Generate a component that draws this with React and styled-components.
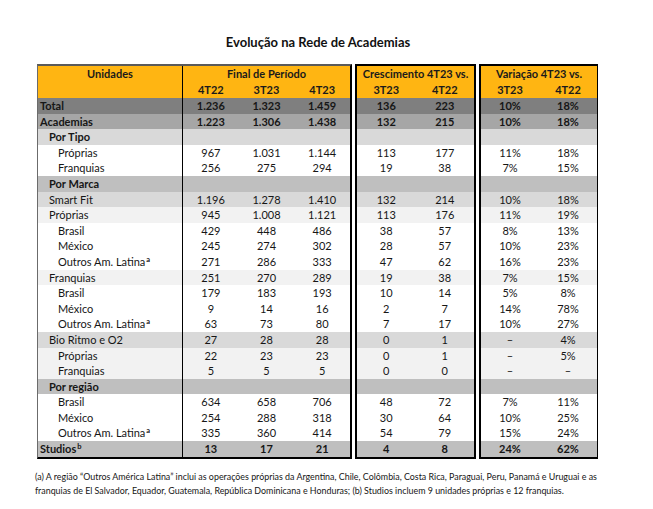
import React from "react";
import styled, { createGlobalStyle } from "styled-components";

const GlobalStyle = createGlobalStyle`
  body {
    margin: 0;
    background: #fff;
    font-family: Lato, "Open Sans", sans-serif;
    color: #161616;
  }
`;

const tones = {
  dark: "#7f7f7f",
  mid: "#a6a6a6",
  band: "#bfbfbf",
  light: "#d9d9d9",
  soft: "#f2f2f2",
  white: "#ffffff",
};

const rows = [
  { label: "Total", level: 0, bold: true, tone: "dark", vals: ["1.236", "1.323", "1.459"], growth: ["136", "223"], pct: ["10%", "18%"] },
  { label: "Academias", level: 0, bold: true, tone: "mid", vals: ["1.223", "1.306", "1.438"], growth: ["132", "215"], pct: ["10%", "18%"] },
  { label: "Por Tipo", level: 1, bold: true, tone: "light" },
  { label: "Próprias", level: 2, tone: "white", vals: ["967", "1.031", "1.144"], growth: ["113", "177"], pct: ["11%", "18%"] },
  { label: "Franquias", level: 2, tone: "white", vals: ["256", "275", "294"], growth: ["19", "38"], pct: ["7%", "15%"] },
  { label: "Por Marca", level: 1, bold: true, tone: "band" },
  { label: "Smart Fit", level: 1, tone: "light", vals: ["1.196", "1.278", "1.410"], growth: ["132", "214"], pct: ["10%", "18%"] },
  { label: "Próprias", level: 1, tone: "soft", vals: ["945", "1.008", "1.121"], growth: ["113", "176"], pct: ["11%", "19%"] },
  { label: "Brasil", level: 2, tone: "white", vals: ["429", "448", "486"], growth: ["38", "57"], pct: ["8%", "13%"] },
  { label: "México", level: 2, tone: "white", vals: ["245", "274", "302"], growth: ["28", "57"], pct: ["10%", "23%"] },
  { label: "Outros Am. Latina", sup: "a", level: 2, tone: "white", vals: ["271", "286", "333"], growth: ["47", "62"], pct: ["16%", "23%"] },
  { label: "Franquias", level: 1, tone: "soft", vals: ["251", "270", "289"], growth: ["19", "38"], pct: ["7%", "15%"] },
  { label: "Brasil", level: 2, tone: "white", vals: ["179", "183", "193"], growth: ["10", "14"], pct: ["5%", "8%"] },
  { label: "México", level: 2, tone: "white", vals: ["9", "14", "16"], growth: ["2", "7"], pct: ["14%", "78%"] },
  { label: "Outros Am. Latina", sup: "a", level: 2, tone: "white", vals: ["63", "73", "80"], growth: ["7", "17"], pct: ["10%", "27%"] },
  { label: "Bio Ritmo e O2", level: 1, tone: "light", vals: ["27", "28", "28"], growth: ["0", "1"], pct: ["–", "4%"] },
  { label: "Próprias", level: 2, tone: "soft", vals: ["22", "23", "23"], growth: ["0", "1"], pct: ["–", "5%"] },
  { label: "Franquias", level: 2, tone: "soft", vals: ["5", "5", "5"], growth: ["0", "0"], pct: ["–", "–"] },
  { label: "Por região", level: 1, bold: true, tone: "band" },
  { label: "Brasil", level: 2, tone: "white", vals: ["634", "658", "706"], growth: ["48", "72"], pct: ["7%", "11%"] },
  { label: "México", level: 2, tone: "white", vals: ["254", "288", "318"], growth: ["30", "64"], pct: ["10%", "25%"] },
  { label: "Outros Am. Latina", sup: "a", level: 2, tone: "white", vals: ["335", "360", "414"], growth: ["54", "79"], pct: ["15%", "24%"] },
  { label: "Studios", sup: "b", level: 0, bold: true, tone: "band", vals: ["13", "17", "21"], growth: ["4", "8"], pct: ["24%", "62%"] },
];

const Page = styled.div`
  width: 562px;
  padding: 33px 0 0 37px;
`;

const Title = styled.h1`
  margin: 0 0 13px;
  text-align: center;
  font-size: 13px;
  font-weight: 700;
  line-height: 18px;
  color: #111;
`;

const Table = styled.div`
  display: flex;
  gap: 3px;
`;

const Panel = styled.div`
  box-sizing: border-box;
  width: ${(p) => p.$width}px;
  border: 2px solid #000;
  border-left: ${(p) => (p.$first ? "1px solid #6b6b6b" : "2px solid #000")};
  border-right-width: ${(p) => (p.$last ? 1 : 2)}px;
  border-top-color: ${(p) => (p.$first ? "#5a5a5a" : "#000")};
`;

const Header = styled.div`
  display: grid;
  grid-template-columns: ${(p) => p.$cols};
  grid-template-rows: 16px 16px;
  background: #ffb512;
  font-size: 11px;
  font-weight: 700;
  line-height: 16px;
  text-align: center;
  color: #1a1a1a;
`;

const HeadLabel = styled.div`
  grid-row: 1 / span 2;
  border-right: 1px solid #000;
`;

const HeadGroup = styled.div`
  grid-column: ${(p) => p.$span};
  white-space: nowrap;
`;

const Row = styled.div`
  display: grid;
  grid-template-columns: ${(p) => p.$cols};
  height: 15.6px;
  line-height: 15.6px;
  font-size: 11px;
  font-weight: ${(p) => (p.$bold ? 700 : 400)};
  background: ${(p) => tones[p.$tone]};
`;

const Label = styled.div`
  padding-left: ${(p) => [2, 11, 20][p.$level]}px;
  border-right: 1px solid #000;
  white-space: nowrap;
`;

const Sup = styled.sup`
  font-size: 7.5px;
  font-weight: 700;
  line-height: 0;
  vertical-align: 4px;
  margin-left: 1px;
`;

const Num = styled.div`
  text-align: center;
`;

const Note = styled.p`
  margin: 11px 0 0 -2px;
  width: 600px;
  font-size: 8.9px;
  line-height: 14px;
  white-space: nowrap;
`;

const LEFT = "145px repeat(3, 1fr)";
const PAIR = "1fr 1fr";

const Unidades = () => (
  <Panel $width={315} $first>
    <Header $cols={LEFT}>
      <HeadLabel>Unidades</HeadLabel>
      <HeadGroup $span="2 / 5">Final de Período</HeadGroup>
      <div>4T22</div>
      <div>3T23</div>
      <div>4T23</div>
    </Header>
    {rows.map((r, i) => (
      <Row key={i} $cols={LEFT} $tone={r.tone} $bold={r.bold}>
        <Label $level={r.level}>
          {r.label}
          {r.sup && <Sup>{r.sup}</Sup>}
        </Label>
        {(r.vals || ["", "", ""]).map((v, j) => (
          <Num key={j}>{v}</Num>
        ))}
      </Row>
    ))}
  </Panel>
);

const PairPanel = ({ title, field, width, last }) => (
  <Panel $width={width} $last={last}>
    <Header $cols={PAIR}>
      <HeadGroup $span="1 / 3">{title}</HeadGroup>
      <div>3T23</div>
      <div>4T22</div>
    </Header>
    {rows.map((r, i) => (
      <Row key={i} $cols={PAIR} $tone={r.tone} $bold={r.bold}>
        {(r[field] || ["", ""]).map((v, j) => (
          <Num key={j}>{v}</Num>
        ))}
      </Row>
    ))}
  </Panel>
);

export default function App() {
  return (
    <>
      <GlobalStyle />
      <Page>
        <Title>Evolução na Rede de Academias</Title>
        <Table>
          <Unidades />
          <PairPanel title="Crescimento 4T23 vs." field="growth" width={121} />
          <PairPanel title="Variação 4T23 vs." field="pct" width={119} last />
        </Table>
        <Note>
          (a) A região “Outros América Latina” inclui as operações próprias da Argentina, Chile, Colômbia, Costa Rica, Paraguai, Peru, Panamá e Uruguai e as
          <br />
          franquias de El Salvador, Equador, Guatemala, República Dominicana e Honduras; (b) Studios incluem 9 unidades próprias e 12 franquias.
        </Note>
      </Page>
    </>
  );
}
